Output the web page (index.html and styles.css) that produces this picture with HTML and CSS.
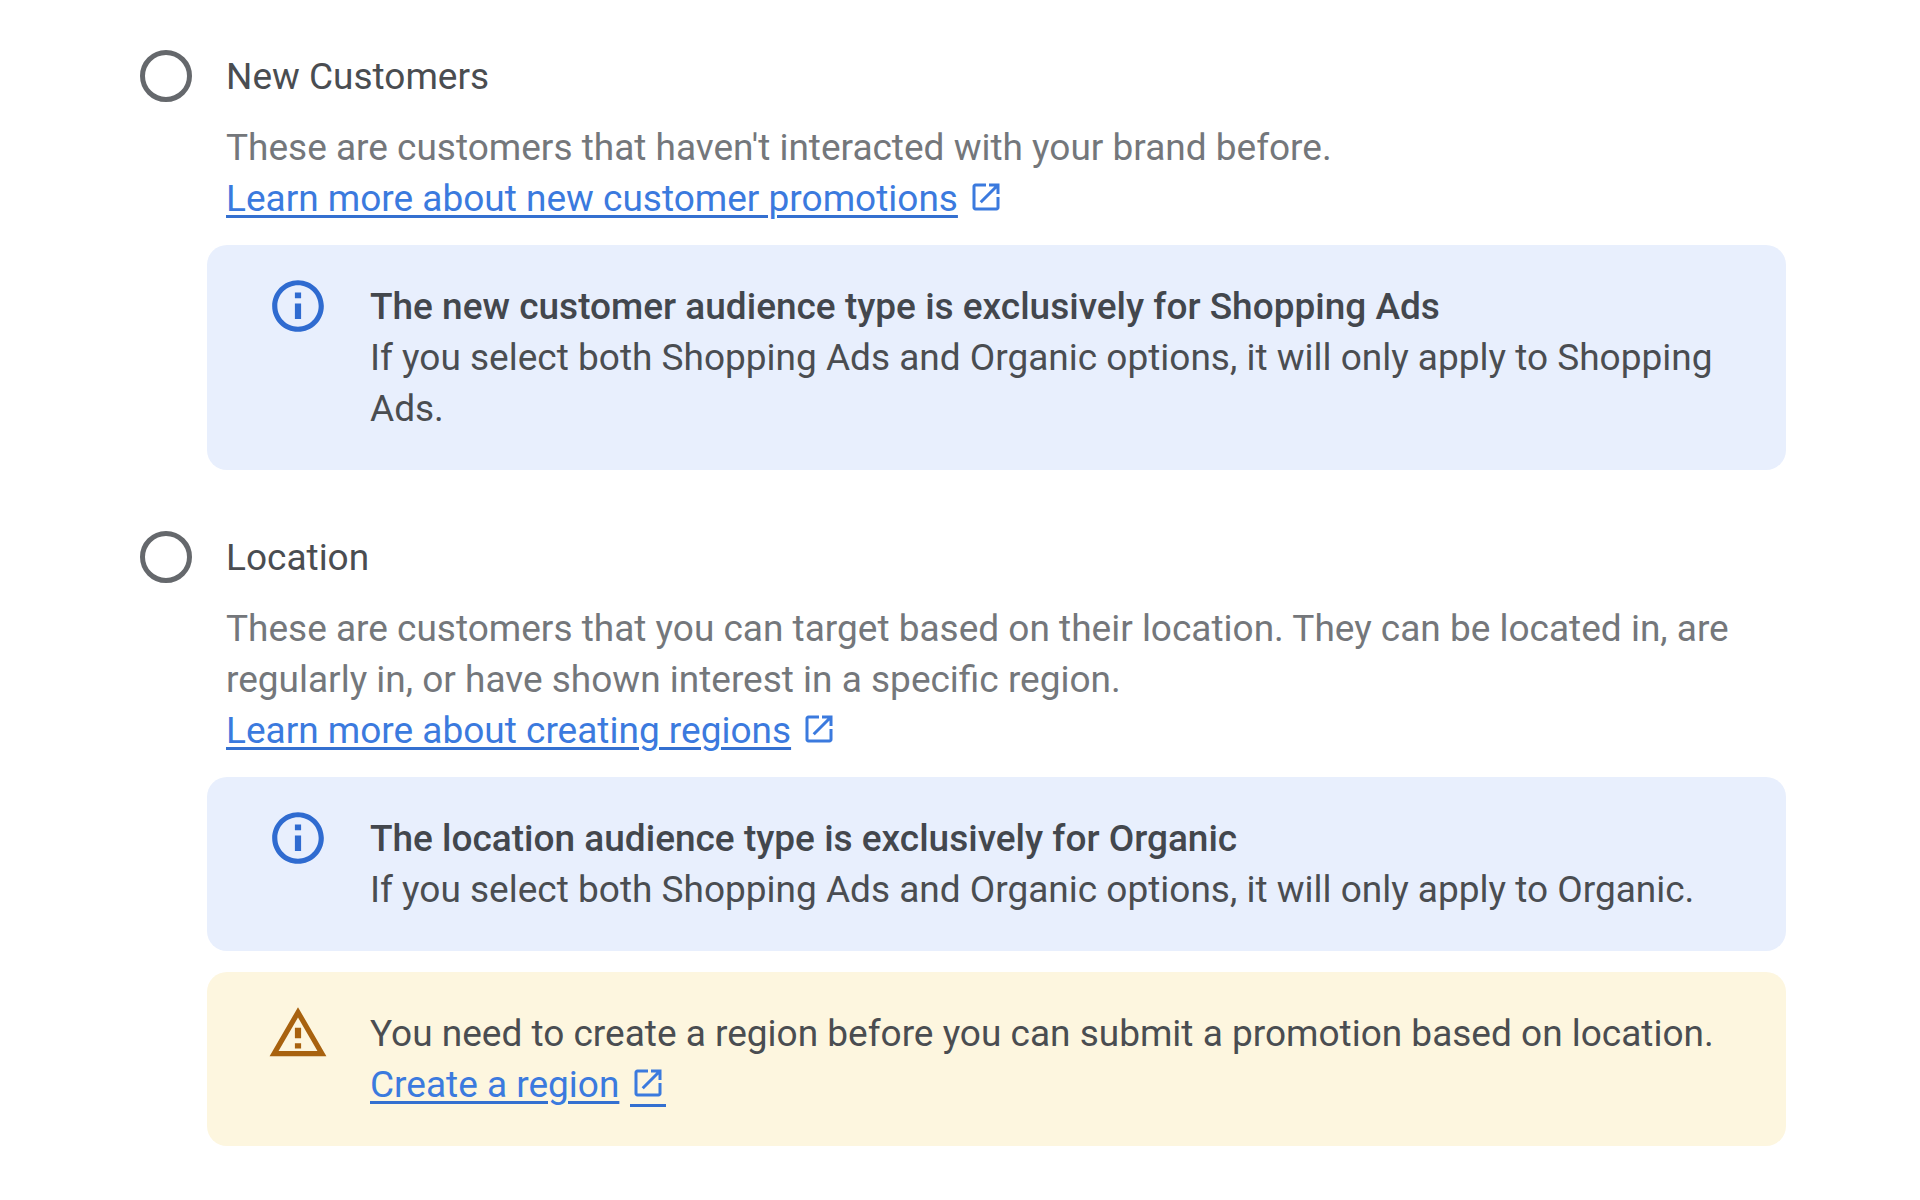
FILE: index.html
```html
<!DOCTYPE html>
<html lang="en">
  <head>
    <meta charset="UTF-8" />
    <meta name="viewport" content="width=device-width, initial-scale=1.0" />
    <title>Audience</title>
    <link rel="stylesheet" href="styles.css" />
  </head>
  <body>
    <svg class="sprite" aria-hidden="true">
      <symbol id="open-in-new" viewBox="0 0 24 24">
        <path d="M19 19H5V5h7V3H5c-1.11 0-2 .9-2 2v14c0 1.1.89 2 2 2h14c1.1 0 2-.9 2-2v-7h-2v7zM14 3v2h3.59l-9.83 9.83 1.41 1.41L19 6.41V10h2V3h-7z" />
      </symbol>
      <symbol id="info" viewBox="0 0 24 24">
        <path d="M10.8 6.8h2.4v2.2h-2.4zm0 4.2h2.4v6h-2.4zM12 2C6.48 2 2 6.48 2 12s4.48 10 10 10 10-4.48 10-10S17.52 2 12 2zm0 18c-4.41 0-8-3.59-8-8s3.59-8 8-8 8 3.59 8 8-3.59 8-8 8z" />
      </symbol>
      <symbol id="warning" viewBox="0 0 24 24">
        <path d="M12 5.99L19.53 19H4.47L12 5.99M12 2L1 21h22L12 2zm1.2 14h-2.4v2h2.4v-2zm0-6h-2.4v4h2.4v-4z" />
      </symbol>
    </svg>

    <form class="audience">
      <section class="option">
        <input type="radio" name="audience" id="new-customers" value="new" />
        <label for="new-customers">New Customers</label>
        <div class="details">
          <p>These are customers that haven't interacted with your brand before.</p>
          <p>
            <a href="#new-customer-promotions">Learn more about new customer promotions</a>
            <svg class="external"><use href="#open-in-new" /></svg>
          </p>
        </div>
        <div class="notice info">
          <svg class="notice-icon"><use href="#info" /></svg>
          <div>
            <h2>The new customer audience type is exclusively for Shopping Ads</h2>
            <p>If you select both Shopping Ads and Organic options, it will only apply to Shopping Ads.</p>
          </div>
        </div>
      </section>

      <section class="option">
        <input type="radio" name="audience" id="location" value="location" />
        <label for="location">Location</label>
        <div class="details">
          <p>These are customers that you can target based on their location. They can be located in, are regularly in, or have shown interest in a specific region.</p>
          <p>
            <a href="#creating-regions">Learn more about creating regions</a>
            <svg class="external"><use href="#open-in-new" /></svg>
          </p>
        </div>
        <div class="notice info">
          <svg class="notice-icon"><use href="#info" /></svg>
          <div>
            <h2>The location audience type is exclusively for Organic</h2>
            <p>If you select both Shopping Ads and Organic options, it will only apply to Organic.</p>
          </div>
        </div>
        <div class="notice warning">
          <svg class="notice-icon"><use href="#warning" /></svg>
          <div>
            <p>You need to create a region before you can submit a promotion based on location.</p>
            <p>
              <a href="#create-region">Create a region</a>
              <svg class="external underlined"><use href="#open-in-new" /></svg>
            </p>
          </div>
        </div>
      </section>
    </form>
  </body>
</html>
```

FILE: styles.css
```css
* {
  box-sizing: border-box;
}
body {
  margin: 0;
  background-color: #fff;
  color: #4a4d51;
  font-family: Roboto, "Liberation Sans", sans-serif;
  font-size: 37px;
  line-height: 51px;
}
p,
h2 {
  margin: 0;
}
a {
  color: #3b7ade;
  text-decoration-color: #3470d0;
  text-decoration-thickness: 3px;
  text-underline-offset: 4px;
}
.sprite {
  display: none;
}
.audience {
  display: flex;
  flex-direction: column;
  gap: 61px;
  padding: 50px 134px 50px 140px;
}
.option {
  display: grid;
  grid-template-columns: 52px 1fr;
  column-gap: 15px;
  align-items: center;
}
.option input {
  appearance: none;
  width: 52px;
  height: 52px;
  margin: 0;
  border: 5px solid #65686c;
  border-radius: 50%;
}
.option input:checked {
  background: radial-gradient(#3b7ade 45%, transparent 50%);
}
.option label {
  padding-left: 19px;
}
.details {
  grid-column: 2;
  margin-top: 20px;
  padding: 0 19px;
  color: #74777b;
}
.external {
  width: 36px;
  height: 36px;
  margin-left: 1px;
  vertical-align: -4px;
  fill: #3b7ade;
}
.notice {
  grid-column: 2;
  display: flex;
  gap: 41px;
  margin-top: 21px;
  padding: 36px 60px;
  border-radius: 20px;
}
.notice h2 {
  color: #43474d;
  font-size: 37px;
  font-weight: 500;
}
/* centre the icon on the first line of text */
.notice-icon {
  flex: none;
  width: 62px;
  height: 62px;
  margin: -6px 0;
}
.info {
  background-color: #e8effd;
}
.info .notice-icon {
  fill: #2f6bd0;
}
.warning {
  background-color: #fdf6df;
}
.warning .notice-icon {
  fill: #a8620f;
}
.underlined {
  height: 42px;
  padding-bottom: 3px;
  border-bottom: 3px solid #3470d0;
  vertical-align: -10px;
}
```
